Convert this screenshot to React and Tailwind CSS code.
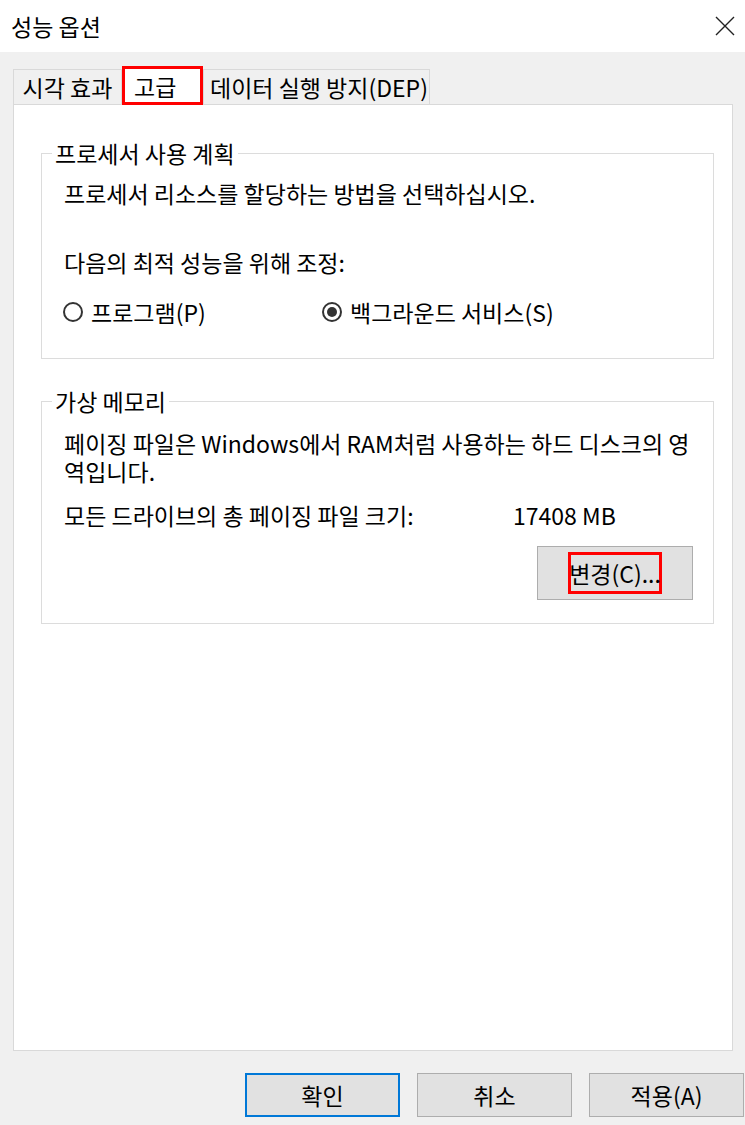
const FONT = { fontFamily: '"Noto Sans CJK KR", "Noto Sans", sans-serif' };

function Radio({ checked, label, className = "" }) {
  return (
    <div className={`flex items-center gap-[8px] ${className}`}>
      <span className="w-[20px] h-[20px] rounded-full border-2 border-[#333333] bg-white flex items-center justify-center">
        {checked && <span className="w-[10px] h-[10px] rounded-full bg-[#333333]" />}
      </span>
      <span>{label}</span>
    </div>
  );
}

function GroupBox({ title, className = "", children }) {
  return (
    <fieldset className={`border border-[#dcdcdc] pl-[10px] pr-[12px] ${className}`}>
      <legend className="px-[3px] leading-[28px]">{title}</legend>
      <div className="pl-[12px]">{children}</div>
    </fieldset>
  );
}

function DialogButton({ label, primary }) {
  return (
    <button
      className={`w-[155px] h-[44px] bg-[#e1e1e1] flex items-center justify-center ${
        primary ? "border-2 border-[#0078d7]" : "border border-[#adadad]"
      }`}
    >
      {label}
    </button>
  );
}

export default function App() {
  return (
    <div
      className="w-[745px] h-[1125px] bg-[#f0f0f0] text-[23px] text-black overflow-hidden"
      style={FONT}
    >
      {/* Title bar */}
      <div className="h-[52px] bg-white flex items-center justify-between pl-[11px] pr-[8px]">
        <span>성능 옵션</span>
        <svg width="22" height="22" viewBox="0 0 22 22" className="mr-[1px]">
          <path d="M2 2L20 20M20 2L2 20" stroke="#222" strokeWidth="1.4" />
        </svg>
      </div>

      {/* Tabs */}
      <div className="pl-[13px] pt-[13px]">
        <div className="flex items-end h-[39px] leading-[28px]">
          <div className="h-[35px] w-[109px] border border-b-0 border-[#d9d9d9] bg-[#f0f0f0] flex items-center justify-center">
            시각 효과
          </div>
          <div className="h-[39px] w-[81px] bg-white border-[3px] border-[#ff0000] flex items-center pl-[9px] -mb-[1px] relative z-10">
            고급
          </div>
          <div className="h-[35px] w-[227px] border border-b-0 border-[#d9d9d9] bg-[#f0f0f0] flex items-center pl-[6px]">
            데이터 실행 방지(DEP)
          </div>
        </div>

        {/* Panel */}
        <div className="w-[720px] h-[947px] bg-white border border-[#d9d9d9] pl-[27px] pr-[18px] pt-[34px]">
          <GroupBox title="프로세서 사용 계획" className="h-[220px]">
            <p className="leading-[28px] mt-[12px]">프로세서 리소스를 할당하는 방법을 선택하십시오.</p>
            <p className="leading-[28px] mt-[41px]">다음의 최적 성능을 위해 조정:</p>
            <div className="flex leading-[28px] mt-[22px]">
              <Radio label="프로그램(P)" className="w-[259px] -ml-[1px]" />
              <Radio checked label="백그라운드 서비스(S)" />
            </div>
          </GroupBox>

          <GroupBox title="가상 메모리" className="h-[237px] mt-[28px]">
            <p className="leading-[28px] mt-[14px] whitespace-nowrap">
              페이징 파일은 Windows에서 RAM처럼 사용하는 하드 디스크의 영
              <br />
              역입니다.
            </p>
            <div className="flex leading-[28px] mt-[16px]">
              <span className="w-[449px]">모든 드라이브의 총 페이징 파일 크기:</span>
              <span>17408 MB</span>
            </div>
            <div className="flex justify-end mt-[17px] pr-[8px]">
              <button className="w-[156px] h-[54px] bg-[#e1e1e1] border border-[#adadad] flex items-center justify-center">
                <span className="border-[3px] border-[#ff0000] h-[42px] w-[94px] flex items-center justify-center whitespace-nowrap">
                  변경(C)...
                </span>
              </button>
            </div>
          </GroupBox>
        </div>
      </div>

      {/* Bottom buttons */}
      <div className="flex justify-end gap-[17px] pt-[22px] pr-[1px]">
        <DialogButton label="확인" primary />
        <DialogButton label="취소" />
        <DialogButton label="적용(A)" />
      </div>
    </div>
  );
}
